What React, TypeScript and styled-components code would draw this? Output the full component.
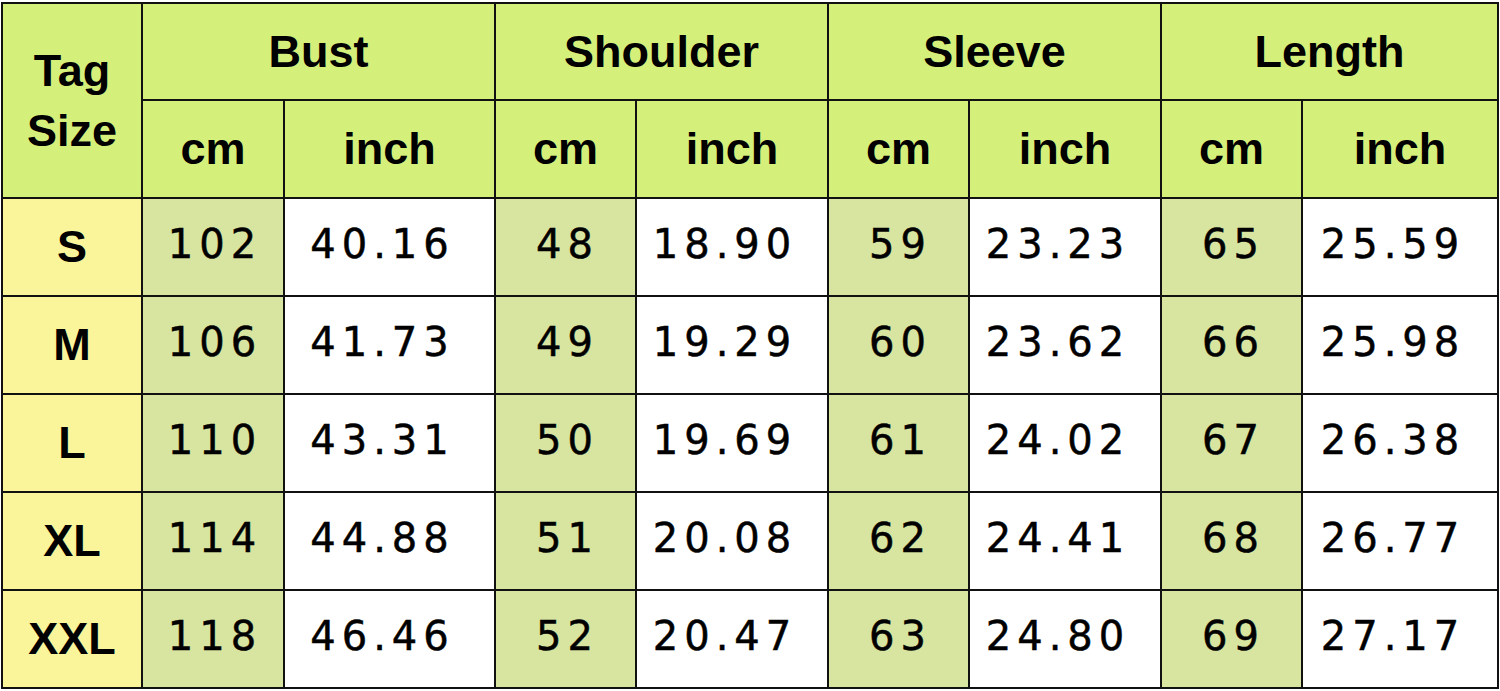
import styled, { createGlobalStyle } from 'styled-components'

const GlobalStyle = createGlobalStyle`
  html, body {
    margin: 0;
    padding: 0;
    background: #ffffff;
  }
`

const Chart = styled.div`
  display: grid;
  grid-template-columns: 138px 140px 209px 139px 190px 139px 190px 139px 194px;
  grid-template-rows: 95px repeat(6, 96px);
  gap: 2px;
  padding: 2px;
  margin: 2px 0 0 1px;
  width: max-content;
  background: #111111;
`

const Cell = styled.div<{ $bg: string; $span?: number; $rows?: number }>`
  display: flex;
  align-items: center;
  justify-content: center;
  background: ${(p) => p.$bg};
  grid-column: span ${(p) => p.$span || 1};
  grid-row: span ${(p) => p.$rows || 1};
  color: #000000;
`

const Head = styled(Cell)`
  font-family: 'Liberation Sans', Arial, sans-serif;
  font-weight: bold;
  font-size: 45px;
  line-height: 60px;
  text-align: center;
`

const Value = styled(Cell)<{ $inch?: boolean }>`
  font-family: 'DejaVu Sans', sans-serif;
  font-size: 40px;
  letter-spacing: 6px;
  -webkit-text-stroke: 0.5px #000;
  padding: 0 ${(p) => (p.$inch ? '18px' : '0')} 6px 4px;
`

const GREEN = '#d5ef7b'
const YELLOW = '#faf59b'
const MOSS = '#d8e5a0'
const WHITE = '#ffffff'

const groups = ['Bust', 'Shoulder', 'Sleeve', 'Length']

const rows = [
  { tag: 'S', vals: ['102', '40.16', '48', '18.90', '59', '23.23', '65', '25.59'] },
  { tag: 'M', vals: ['106', '41.73', '49', '19.29', '60', '23.62', '66', '25.98'] },
  { tag: 'L', vals: ['110', '43.31', '50', '19.69', '61', '24.02', '67', '26.38'] },
  { tag: 'XL', vals: ['114', '44.88', '51', '20.08', '62', '24.41', '68', '26.77'] },
  { tag: 'XXL', vals: ['118', '46.46', '52', '20.47', '63', '24.80', '69', '27.17'] },
]

const App: React.FC = () => {
  return (
    <>
      <GlobalStyle />
      <Chart>
        <Head $bg={GREEN} $rows={2}>
          Tag
          <br />
          Size
        </Head>
        {groups.map((g) => (
          <Head key={g} $bg={GREEN} $span={2}>
            {g}
          </Head>
        ))}
        {groups.map((g) => [
          <Head key={g + '-cm'} $bg={GREEN}>cm</Head>,
          <Head key={g + '-in'} $bg={GREEN}>inch</Head>,
        ])}
        {rows.map((r) => [
          <Head key={r.tag} $bg={YELLOW}>{r.tag}</Head>,
          ...r.vals.map((v, i) => (
            <Value key={r.tag + i} $bg={i % 2 === 0 ? MOSS : WHITE} $inch={i % 2 === 1}>
              {v}
            </Value>
          )),
        ])}
      </Chart>
    </>
  )
}

export default App
